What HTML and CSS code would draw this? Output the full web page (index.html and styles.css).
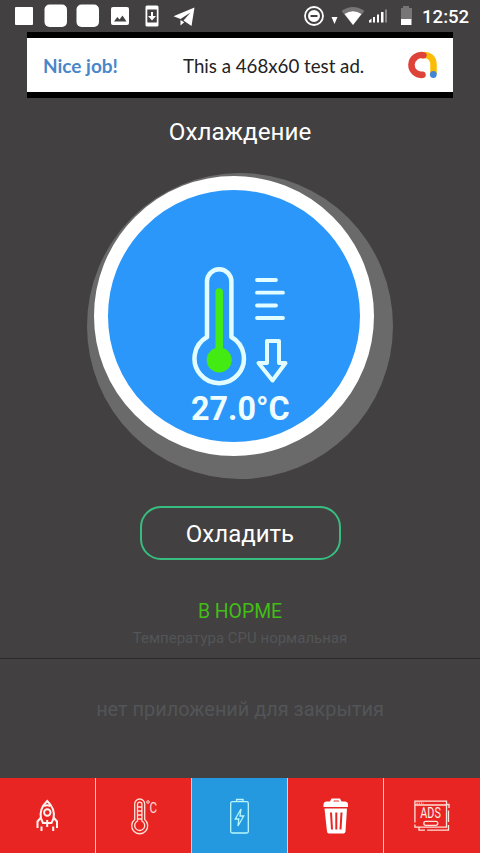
FILE: index.html
```html
<!DOCTYPE html>
<html lang="ru">
<head>
<meta charset="utf-8">
<title>Охлаждение</title>
<link rel="stylesheet" href="styles.css">
</head>
<body>
<div class="screen">
  <header class="status">
    <svg class="status-icons" width="420" height="32" viewBox="0 0 420 32" fill="#fff">
      <rect x="15" y="7" width="18" height="18" rx="1"/>
      <rect x="44.500" y="4.500" width="22.500" height="22.500" rx="5"/>
      <rect x="76.500" y="4.500" width="22.500" height="22.500" rx="5"/>
      <path fill-rule="evenodd" d="M113 7h14q2 0 2 2v14q0 2-2 2h-14q-2 0-2-2V9q0-2 2-2zM114 21.500h12.500L122.500 15.500l-3 4-2.200-2.500z"/>
      <path fill-rule="evenodd" d="M147 5.500h10q1.500 0 1.500 1.500v18q0 1.500-1.500 1.500h-10q-1.500 0-1.500-1.500V7q0-1.500 1.500-1.500zM147.300 9.500v13h9.500v-13z"/>
      <path d="M151 12h2v4h3l-4 4.500-4-4.500h3z"/>
      <path d="M173.500 16.300 194.500 7.500 191.500 26 183.500 20.500 190.500 12.500 180.500 19z"/>
      <path d="M180.500 20 184.200 22.300 180.500 25.500z"/>
      <circle cx="314" cy="16" r="9" fill="none" stroke="#fff" stroke-width="1.800"/>
      <path fill-rule="evenodd" d="M314 10a6 6 0 1 0 0 12a6 6 0 0 0 0-12zM310.500 15v2h7v-2z"/>
      <path d="M331.500 17h6l-3 7z"/>
      <path fill="#777576" d="M341.500 11Q353 3 364.500 11L353 25z"/>
      <path d="M344.500 14Q353 8.500 361.500 14L353 25z"/>
      <path d="M369 20.500l2.500-2v4H369zM373 17h2v5.500h-2zM377 14.500h2v8h-2zM381 12h2.500v10.500H381z"/>
      <path fill="#8a8889" d="M385 9.500h2v13h-2z"/>
      <path fill="#777576" d="M403 6h6v2h3v11h-11V8h2z"/>
      <path d="M401 19h10.500v6H401z"/>
    </svg>
    <span class="clock">12:52</span>
  </header>

  <section class="ad">
    <span class="ad-link">Nice job!</span>
    <span class="ad-text">This a 468x60 test ad.</span>
    <svg class="ad-logo" width="30" height="30" viewBox="0 0 30 30" fill="none" stroke-width="6.500">
      <path stroke="#fbbc05" stroke-linecap="butt" d="M14 5.200C21 4 25.500 8 25.500 14.500V24"/>
      <path stroke="#dd4339" stroke-linecap="round" d="M15.500 5.300A9.900 9.900 0 1 0 14.500 24.800"/>
      <circle cx="25.300" cy="24.500" r="3.400" fill="#4385d4"/>
    </svg>
  </section>

  <h1 class="title">Охлаждение</h1>

  <div class="gauge">
    <div class="dial">
      <svg class="thermo" width="100" height="124" viewBox="0 0 100 124" fill="none" stroke="#e2fdff" stroke-width="4.500" stroke-linejoin="round" stroke-linecap="round">
        <path d="M16 72V16.500A12.200 12.200 0 0 1 40.400 16.500V72A24.700 24.700 0 1 1 16 72z"/>
        <path stroke="#43eb13" stroke-width="7.500" d="M28.200 27V90"/>
        <circle cx="28.200" cy="95" r="12.500" fill="#43eb13" stroke="none"/>
        <path stroke-width="3.800" d="M66 15h19M66 27.700h26M66 40.500h19M66 53h26"/>
        <path stroke-width="4" d="M76 76H88V98H94.500L81.500 115.500 67.500 98H76z"/>
      </svg>
      <div class="degrees">27.0°C</div>
    </div>
  </div>

  <button class="cool">Охладить</button>
  <div class="state">В НОРМЕ</div>
  <div class="detail">Температура CPU нормальная</div>

  <main class="apps">нет приложений для закрытия</main>

  <nav class="tabs">
    <div class="tab">
      <svg width="26" height="36" viewBox="0.5 0 26 36" fill="none" stroke="#fff4f0" stroke-width="2">
        <path d="M12.700 3C8 7.500 5 13.500 6.500 20.500L8.500 25H17L19 20.500C20.500 13.500 17.500 7.500 12.700 3z"/>
        <circle cx="12.800" cy="14.500" r="3.200"/>
        <path d="M9.500 8.200Q12.700 6.500 16 8.200M6.500 19.500 3 23.500V30M19 19.500l3.500 4V30M12.700 22v7M7 28.500V33M18.700 28.500V33"/>
      </svg>
    </div>
    <div class="tab">
      <svg width="34" height="40" viewBox="-1.700 0 34 40" fill="none" stroke="#ffe2d8" stroke-width="1.300">
        <path d="M6 23.500V8A5 5 0 0 1 16 8V23.500A8 8 0 1 1 6 23.500z"/>
        <path d="M8.800 25V8.300a2.200 2.200 0 0 1 4.400 0V25A5 5 0 1 1 8.800 25zM9 11h4M9 15h4M9 19h4M9 23h4"/>
        <circle cx="19.300" cy="6" r="1.300" stroke-width="1"/>
        <text class="unit" x="20.800" y="17" textLength="7.500" lengthAdjust="spacingAndGlyphs">C</text>
      </svg>
    </div>
    <div class="tab tab-active">
      <svg width="24" height="40" viewBox="0 0 24 40" fill="none" stroke="#b7f7fa" stroke-width="1.300">
        <rect x="2.700" y="5.700" width="17.600" height="31.300" rx="1.500"/>
        <path d="M8.500 5.500V3.500H15v2M13 13 7.300 23H10.800L10 30 15.700 20H12z"/>
      </svg>
    </div>
    <div class="tab">
      <svg width="28" height="40" viewBox="0 0 28 40" fill="#fff">
        <path fill-rule="evenodd" d="M1.500 8Q1.500 6 4 5.500H8L9.500 2.500H18L19.500 5.500H23.500Q26 6 26 8V11H1.500zM11 5.500h6.500L16.500 4.500H12zM2.500 12.500H25L23.500 35.500Q23.300 37.500 21.500 37.500H7Q5.200 37.500 5 35.500zM8 16.500l1 17h2L10 16.500zM13.300 16.500v17h2V16.500zM18.500 16.500l-1 17h2l1-17z"/>
      </svg>
    </div>
    <div class="tab">
      <svg width="38" height="36" viewBox="0 0 38 36" fill="none" stroke="#ffe2d8" stroke-width="1.300">
        <path d="M1.900 24.500V3.200H33.500V29.200H1.900V26.500M2 7H33.500M6 29.200v3H12M14 32.200H35.500V27M35.500 24V12.500M33.500 6.500H36V10"/>
        <path stroke-dasharray="1.200 1" d="M3.500 5.100h7"/>
        <rect x="10.800" y="23.300" width="14" height="4" rx="2"/>
        <text class="ads" x="7.300" y="19.800" textLength="20.500" lengthAdjust="spacingAndGlyphs">ADS</text>
      </svg>
    </div>
  </nav>
</div>
</body>
</html>
```

FILE: styles.css
```css
* { box-sizing: border-box; }

body {
  margin: 0;
  background: #424041;
  font-family: Roboto, "Liberation Sans", sans-serif;
}

.screen {
  display: flex;
  flex-direction: column;
  width: 480px;
  height: 853px;
  overflow: hidden;
  background: #424041;
  color: #fff;
}

.status { display: flex; align-items: center; height: 32px; }
.status-icons { flex: none; }
.clock { margin-left: 2px; padding-top: 1px; font-size: 18.600px; font-weight: 500; line-height: 32px; }

.ad {
  display: flex;
  align-items: center;
  width: 426px;
  height: 66px;
  margin-left: 27px;
  padding-left: 16px;
  border: solid #000;
  border-width: 6px 0;
  background: #fff;
  font-family: Lato, Roboto, sans-serif;
  font-size: 18.700px;
  white-space: nowrap;
}
.ad-link { width: 140px; color: #4a86c8; font-size: 19px; font-weight: 700; }
.ad-text { width: 223px; padding-top: 1px; color: #222; }
.ad-logo { flex: none; margin-left: 2px; }

.title {
  height: 75px;
  margin: 0;
  padding-top: 18px;
  font-size: 24.200px;
  font-weight: 400;
  line-height: 32px;
  text-align: center;
}

.gauge {
  flex: none;
  width: 306px;
  height: 306px;
  margin-left: 87px;
  padding: 3px 7px;
  border-radius: 50%;
  background: #6b6a6a;
}
.dial {
  width: 280px;
  height: 280px;
  padding: 75px 0 0 83px;
  border: 14px solid #fff;
  border-radius: 50%;
  background: #2b97fa;
}
.thermo { display: block; }
.degrees {
  width: 100px;
  color: #effeff;
  font-size: 32.300px;
  font-weight: 700;
  line-height: 40px;
  white-space: nowrap;
}

.cool {
  flex: none;
  align-self: center;
  width: 201px;
  height: 54px;
  margin-top: 27px;
  padding: 2px 0 0;
  border: 2px solid #38bd80;
  border-radius: 21px;
  background: none;
  color: #fff;
  font: 400 24px Roboto, sans-serif;
}
.state {
  margin-top: 39px;
  color: #43bd18;
  font-size: 19.400px;
  line-height: 26px;
  text-align: center;
}
.detail {
  height: 34px;
  border-bottom: 1px solid #2b292a;
  color: #535557;
  font-size: 15px;
  line-height: 26px;
  text-align: center;
}
.apps {
  flex: 1;
  padding-top: 38px;
  color: #525557;
  font-size: 19.900px;
  line-height: 26px;
  text-align: center;
}

.tabs {
  display: grid;
  flex: none;
  grid-template-columns: 96px 96px 96px 96px 96px;
  height: 75px;
  background: #e92524;
}
.tab {
  display: flex;
  align-items: center;
  justify-content: center;
  border-right: 1px solid #f9c4c4;
}
.tab:last-child { border-right: 0; }
.tab-active { background: #2599e0; }
.unit { fill: #ffe2d8; stroke: none; font-size: 14px; }
.ads { fill: #fff0ea; stroke: none; font-size: 14px; }
```
